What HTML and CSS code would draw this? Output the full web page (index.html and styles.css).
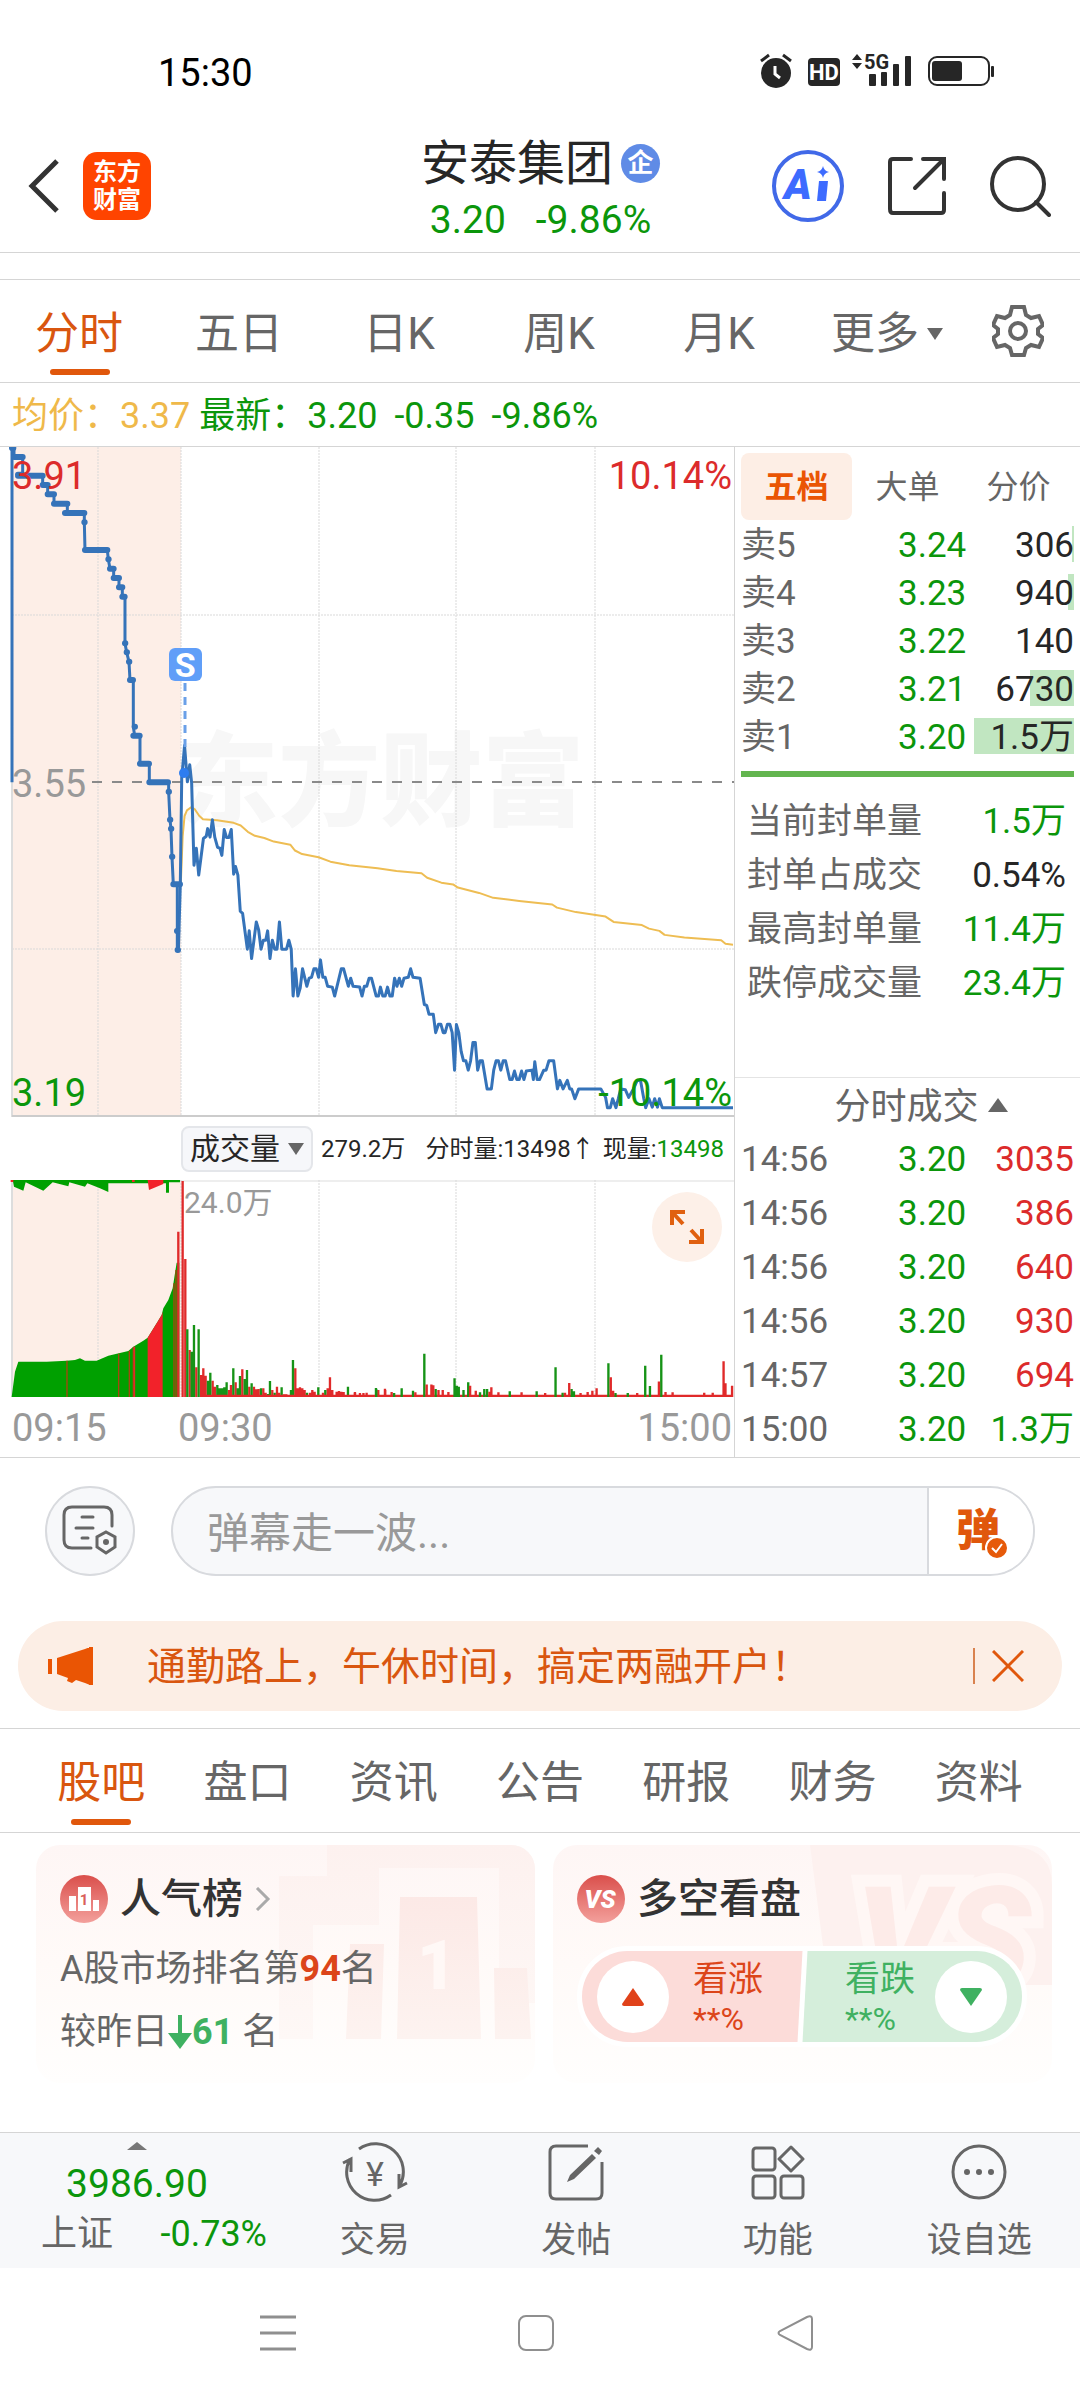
FILE: index.html
```html
<!DOCTYPE html>
<html lang="zh-CN">
<head>
<meta charset="utf-8">
<meta name="viewport" content="width=device-width, initial-scale=1">
<title>安泰集团 3.20 -9.86%</title>
<link rel="stylesheet" href="styles.css">
</head>
<body>
<div class="app">

<div class="status">
  <span class="clock">15:30</span>
  <svg class="status-icons" viewBox="0 0 236 36" role="img" aria-label="闹钟 高清通话 5G 电量">
    <g fill="#262626">
      <circle cx="16" cy="19" r="15"/>
      <path d="M1 7L9 1M31 7L23 1" stroke="#262626" stroke-width="3"/>
      <path d="M15 12v8l5 4" fill="none" stroke="#fff" stroke-width="3"/>
      <rect x="48" y="4" width="32" height="28" rx="4"/>
      <path d="M92 6l5-6 5 6zM92 9l5 6 5-6z"/>
      <rect x="109" y="20" width="7" height="12" rx="1"/><rect x="121" y="18" width="6" height="14" rx="1"/>
      <rect x="133" y="10" width="6" height="22" rx="1"/><rect x="145" y="2" width="6" height="30" rx="1"/>
      <rect x="172" y="7" width="30" height="20" rx="3"/>
      <rect x="231" y="12" width="3" height="11" rx="1"/>
    </g>
    <rect x="169" y="3" width="60" height="28" rx="8" fill="none" stroke="#262626" stroke-width="2"/>
    <text x="64" y="26" text-anchor="middle" class="svg-hd">HD</text>
    <text x="104" y="15" class="svg-5g">5G</text>
  </svg>
</div>

<header class="header">
  <div class="header-left">
    <button class="icon-btn" aria-label="返回"><svg width="32" height="56" viewBox="0 0 32 56"><path d="M29 3L4 28L29 53" fill="none" stroke="#333" stroke-width="5"/></svg></button>
    <a class="logo" href="#home"><span>东方</span><span>财富</span></a>
  </div>
  <div class="header-title">
    <h1>安泰集团<span class="corp">企</span></h1>
    <p><span>3.20</span><span>-9.86%</span></p>
  </div>
  <div class="header-right">
    <button class="icon-btn" aria-label="AI 助手"><svg width="74" height="74" viewBox="0 0 74 74"><circle cx="37" cy="37" r="34" fill="none" stroke="#4169e8" stroke-width="4"/><text x="13" y="50" class="svg-ai">A</text><path d="M48 32h9l-2 20h-9z" fill="#3d6bff"/><path d="M52 17q1 5 6 6q-5 1-6 6q-1-5-6-6q5-1 6-6z" fill="#3d6bff"/></svg></button>
    <button class="icon-btn" aria-label="分享"><svg width="60" height="60" viewBox="0 0 60 60"><path d="M24 3H6Q3 3 3 6V53Q3 57 6 57H54Q57 57 57 54V37M36 3H57V23M56 4L28 32" fill="none" stroke="#333" stroke-width="4" stroke-linecap="round"/></svg></button>
    <button class="icon-btn" aria-label="搜索"><svg width="62" height="62" viewBox="0 0 62 62"><circle cx="29" cy="29" r="26" fill="none" stroke="#333" stroke-width="4"/><path d="M47 47L60 60" stroke="#333" stroke-width="4" stroke-linecap="round"/></svg></button>
  </div>
</header>

<nav class="period-tabs">
  <button class="tab active">分时</button><button class="tab">五日</button><button class="tab">日K</button><button class="tab">周K</button><button class="tab">月K</button>
  <button class="tab">更多<svg width="16" height="14" viewBox="0 0 16 14"><path d="M0 1H16L8 13z" fill="#666"/></svg></button>
  <button class="icon-btn gear" aria-label="设置"><svg width="52" height="52" viewBox="0 0 52 52"><path d="M20 2h12l2 8 5 3 8-2 4 9-5 4v5l5 4-4 9-8-2-5 3-2 7H20l-2-7-5-3-8 2-4-9 5-4v-5l-5-4 4-9 8 2 5-3z" fill="none" stroke="#666" stroke-width="4"/><circle cx="26" cy="26" r="8" fill="none" stroke="#666" stroke-width="4"/></svg></button>
</nav>

<div class="quote-line"><span class="avg">均价：3.37</span><span>最新：3.20</span><span>-0.35</span><span>-9.86%</span></div>

<main class="market">
  <section class="charts">
    <div class="price-chart">
      <span class="watermark">东方财富</span>
      <svg class="plot" viewBox="0 0 734 670" preserveAspectRatio="none" aria-hidden="true">
        <rect x="12" y="0" width="169" height="670" fill="#fdeee7"/>
        <g stroke="#d9d9d9" stroke-width="1" stroke-dasharray="2 1">
          <path d="M98 0V670M181 0V670M319 0V670M456 0V670M595 0V670M12 168H734M12 502H734" fill="none"/>
        </g>
        <path d="M12 0V670" stroke="#ddd" stroke-width="2"/>
        <path d="M12 669H734" stroke="#ccc" stroke-width="2"/>
        <path d="M92 335H734" stroke="#8a8a8a" stroke-width="2" stroke-dasharray="10 10"/>
        <g transform="translate(0 -17) scale(.472 .4464)" fill="none" stroke-linejoin="round">
          <path class="line-avg" d="M383 1018L387 910L391 865L396 852L405 845L413 850L422 864L430 872L460 874L495 880L510 886L525 900L540 909L560 914L580 922L615 929L625 942L640 950L675 957L700 967L740 975L800 982L840 988L893 993L905 1003L935 1014L960 1018L970 1025L1015 1037L1045 1048L1100 1055L1170 1063L1180 1070L1220 1080L1283 1090L1300 1102L1360 1109L1375 1117L1397 1122L1408 1131L1450 1137L1528 1143L1537 1151L1553 1153"/>
          <polyline class="line-price" points="378,1165 382,1018 385,780 391,707 397,788 402,750 406,790 411,975 416,937 421,997 431,915 437,910 440,893 445,912 450,873 455,912 461,935 466,937 470,953 475,895 480,913 485,913 490,895 495,995 499,978 504,997 509,1078 514,1083 524,1163 528,1122 533,1184 543,1102 548,1120 553,1163 558,1143 563,1143 567,1122 572,1184 577,1143 582,1163 587,1163 592,1102 597,1163 607,1163 612,1143 617,1163 621,1268 626,1207 631,1268 636,1250 641,1207 650,1246 655,1228 660,1226 665,1207 670,1207 675,1226 679,1187 684,1226 689,1226 694,1246 704,1248 709,1268 723,1207 728,1207 738,1246 743,1228 748,1246 762,1248 767,1268 772,1246 777,1246 782,1228 787,1228 797,1268 802,1268 806,1248 811,1268 816,1268 821,1248 826,1268 831,1268 836,1228 841,1246 846,1228 851,1246 856,1228 865,1226 870,1207 875,1226 890,1228 899,1287 904,1289 909,1309 918,1309 923,1350 929,1331 934,1331 939,1350 943,1350 948,1331 953,1331 958,1350 963,1434 967,1332 972,1350 977,1392 982,1413 987,1413 992,1434 997,1413 1002,1372 1007,1372 1012,1434 1017,1413 1022,1413 1032,1476 1041,1476 1046,1434 1051,1413 1056,1413 1061,1434 1066,1413 1071,1413 1080,1455 1085,1455 1090,1436 1095,1455 1100,1455 1105,1436 1110,1455 1115,1436 1127,1434 1130,1455 1133,1415 1138,1455 1143,1455 1152,1434 1157,1434 1163,1413 1173,1413 1181,1476 1186,1457 1193,1476 1202,1457 1207,1476 1211,1476 1218,1498 1226,1476 1273,1476 1283,1495 1287,1518 1293,1518 1298,1498 1305,1518 1310,1498 1315,1476 1325,1478 1332,1495 1342,1476 1350,1457 1357,1457 1364,1498 1368,1518 1375,1498 1382,1517 1387,1498 1393,1517 1397,1498 1403,1518 1553,1518"/>
        </g>
        <g transform="translate(0 -7) scale(.3333)" fill="none">
          <path class="line-price" d="M36 1027V24H42V51H68V107H128V135H143V163H162V191H202V219H253V247L255 330H322L325 358L330 386H341V414H357V442H367V470H375V610L380 637L387 665L390 720H400V860L404 887H420V971H448V1027H506V1055L510 1139L513 1166L516 1250L520 1333H532V1530"/>
          <path class="line-step" d="M36 24h4M42 51h26M54 104h12M54 107h74M128 135h15M143 163h19M162 191h40M195 219h58M253 247h1M255 330h67M325 358h1M330 386h11M341 414h16M357 442h10M367 470h7M375 610h1M380 637h1M387 665h1M390 720h9M404 860h1M400 887h19M420 971h27M448 1027h56M506 1055h1M510 1139h1M513 1166h1M516 1250h1M520 1333h20M531 1473h1M533 1530h1"/>
        </g>
        <path d="M185 236V300" stroke="#6aa0e8" stroke-width="3" stroke-dasharray="8 6"/>
        <circle cx="184" cy="326" r="5" fill="#2d7df0"/>
      </svg>
      <span class="sell-mark">S</span>
      <span class="lbl top-left red">3.91</span><span class="lbl top-right red">10.14%</span>
      <span class="lbl middle-left">3.55</span>
      <span class="lbl bottom-left green">3.19</span><span class="lbl bottom-right green">-10.14%</span>
    </div>

    <div class="volume-info">
      <button class="indicator">成交量<svg width="16" height="14" viewBox="0 0 16 14"><path d="M0 1H16L8 13z" fill="#666"/></svg></button>
      <span>279.2万</span><span>分时量:13498↑</span><span>现量:<b class="green">13498</b></span>
    </div>

    <div class="volume-chart">
      <svg class="plot" viewBox="0 0 734 217" preserveAspectRatio="none" aria-hidden="true">
        <rect x="12" y="0" width="169" height="217" fill="#fdeee7"/>
        <path d="M98 0V217M181 0V217M319 0V217M456 0V217M595 0V217" fill="none" stroke="#d9d9d9" stroke-dasharray="2 1"/>
        <path d="M12 0V217" stroke="#ddd" stroke-width="2"/>
        <path d="M12 1H734" stroke="#ddd"/>
        <g transform="translate(0 -10) scale(.3333)">
          <path fill="#00a000" d="M35 681L45 605L55 575H140L200 572L225 570L240 565L255 572H290L325 557L385 543L400 530L430 512L443 503L470 460L485 435L490 415L505 390L518 355L525 310L530 278H538V681z"/>
          <path fill="#f2222a" d="M443 681V503L470 460L485 435L488 425V681z"/>
          <path stroke="#a5470f" stroke-width="4" d="M201 681V572M356 681V551M388 681V543M400 681V532M522 681V340M528 681V300"/>
          <path stroke="#e02a2a" stroke-width="5" d="M403 681V530"/>
          <path fill="#00a000" d="M38 30H540V37H507V68H498V40H325V66L300 55L262 40L255 50L208 37L205 49L158 37L130 62L77 37L70 62L42 50z"/>
          <path fill="#f2222a" d="M443 30H490V42L447 60zM32 30h8v6h-8zM396 30h8v6h-8z"/>
          <path class="bar-red" d="M535 681V185M548 681V33M556 681V267M569 681V540M589 681V592M603 681V615M610 681V595M617 681V617M638 681V632M645 681V650M687 681V660M693 681V645M707 681V637M727 681V598M748 681V650M762 681V650M769 681V658M776 681V657M790 681V655M797 681V668M817 681V660M831 681V650M838 681V668M852 681V673M859 681V673M886 681V595M893 681V655M900 681V652M907 681V655M914 681V660M930 681V668M937 681V660M944 681V665M969 681V668M983 681V655M990 681V622M997 681V660M1010 681V665M1017 681V663M1024 681V665M1031 681V666M1065 681V666M1080 681V669M1100 681V668M1135 681V660M1155 681V656M1175 681V666"/>
          <path class="bar-green" d="M562 681V478M575 681V545M582 681V465M596 681V478M624 681V632M631 681V608M652 681V645M659 681V655M666 681V655M673 681V652M680 681V637M700 681V595M713 681V655M720 681V618M734 681V627M741 681V600M755 681V640M783 681V655M804 681V672M810 681V633M824 681V668M845 681V652M873 681V660M879 681V570M921 681V668M955 681V652M976 681V660M1044 681V650M1128 681V654"/>
        </g>
        <g transform="translate(0 -121) scale(.472 .335)">
          <path stroke="#e02a2a" stroke-width="8" d="M430 1006H1553"/>
          <path class="bar-low green-bar" d="M797 1010V985M835 1010V997M851 1010V983M875 1010V990M899 1010V880M923 1010V985M963 1010V953M968 1010V975M972 1010V978M982 1010V988M992 1010V965M1017 1010V995M1026 1010V985M1032 1010V985M1080 1010V992M1137 1010V992M1177 1010V920M1192 1010V996M1211 1010V985M1216 1010V992M1289 1010V908M1304 1010V997M1330 1010V997M1367 1010V916M1377 1010V976M1401 1010V883"/>
          <path class="bar-low red-bar" d="M752 1010V996M770 1010V997M816 1010V988M880 1010V995M904 1010V972M914 1010V972M918 1010V974M929 1010V988M938 1010V988M950 1010V994M996 1010V975M1008 1010V990M1037 1010V993M1041 1010V980M1056 1010V995M1105 1010V995M1155 1010V997M1197 1010V996M1206 1010V967M1230 1010V997M1245 1010V994M1255 1010V990M1264 1010V983M1294 1010V950M1299 1010V990M1350 1010V997M1396 1010V963M1410 1010V994M1425 1010V995M1492 1010V996M1510 1010V996M1533 1010V902M1537 1010V968M1551 1010V975"/>
        </g>
      </svg>
      <span class="max-volume">24.0万</span>
      <button class="expand" aria-label="展开"><svg width="36" height="36" viewBox="0 0 36 36"><path d="M3 16V3H16M4 4L14 15M22 21L32 32M20 33H33V20" fill="none" stroke="#e0600f" stroke-width="4"/></svg></button>
    </div>
    <div class="time-axis"><span>09:15</span><span>09:30</span><span>15:00</span></div>
  </section>

  <aside class="orders">
    <div class="order-tabs"><button class="active">五档</button><button>大单</button><button>分价</button></div>
    <table class="depth">
      <tr><th scope="row">卖5</th><td>3.24</td><td><i style="width:2px"></i><span>306</span></td></tr>
      <tr><th scope="row">卖4</th><td>3.23</td><td><i style="width:6px"></i><span>940</span></td></tr>
      <tr><th scope="row">卖3</th><td>3.22</td><td><span>140</span></td></tr>
      <tr><th scope="row">卖2</th><td>3.21</td><td><i style="width:44px"></i><span>6730</span></td></tr>
      <tr><th scope="row">卖1</th><td>3.20</td><td><i style="width:100px"></i><span>1.5万</span></td></tr>
    </table>
    <dl class="limit">
      <div><dt>当前封单量</dt><dd class="green">1.5万</dd></div>
      <div><dt>封单占成交</dt><dd>0.54%</dd></div>
      <div><dt>最高封单量</dt><dd class="green">11.4万</dd></div>
      <div><dt>跌停成交量</dt><dd class="green">23.4万</dd></div>
    </dl>
    <button class="ticks-title">分时成交<svg width="22" height="16" viewBox="0 0 22 16"><path d="M11 1L21 15H1z" fill="#666"/></svg></button>
    <table class="ticks">
      <tr><th scope="row">14:56</th><td>3.20</td><td class="red">3035</td></tr>
      <tr><th scope="row">14:56</th><td>3.20</td><td class="red">386</td></tr>
      <tr><th scope="row">14:56</th><td>3.20</td><td class="red">640</td></tr>
      <tr><th scope="row">14:56</th><td>3.20</td><td class="red">930</td></tr>
      <tr><th scope="row">14:57</th><td>3.20</td><td class="red">694</td></tr>
      <tr><th scope="row">15:00</th><td>3.20</td><td class="green">1.3万</td></tr>
    </table>
  </aside>
</main>

<div class="comment">
  <button class="round-btn" aria-label="弹幕设置"><svg width="58" height="54" viewBox="0 0 58 54"><g fill="none" stroke="#666" stroke-width="3" stroke-linecap="round"><path d="M51 22V11Q51 3 43 3H11Q3 3 3 11V36Q3 44 11 44H30"/><path d="M21 13H32M15 24H32M21 34H27"/><path d="M45 28L54 33V43L45 49L36 43V33z"/></g><circle cx="45" cy="38" r="3" fill="#666"/></svg></button>
  <div class="comment-box">
    <input type="text" aria-label="发送弹幕" placeholder="弹幕走一波...">
    <button class="danmu-btn">弹<svg width="24" height="24" viewBox="0 0 24 24"><circle cx="12" cy="12" r="11" fill="#e65a0a" stroke="#fff" stroke-width="2"/><path d="M7 12l4 4 6-8" fill="none" stroke="#fff" stroke-width="2"/></svg></button>
  </div>
</div>

<div class="banner">
  <svg width="46" height="40" viewBox="0 0 46 40"><g fill="#ea5504"><path d="M0 13h4v15H0zM9 12L37 3V37L28 34L24 37L19 35L20 32L9 28z"/><path d="M41 1h4v38h-4zM37 3l5-2v38l-5-2z"/></g></svg>
  <a href="#open-account">通勤路上，午休时间，搞定两融开户！</a>
  <button class="close" aria-label="关闭"><svg width="32" height="32" viewBox="0 0 32 32"><path d="M1 1L31 31M31 1L1 31" stroke="#e0570c" stroke-width="3"/></svg></button>
</div>

<nav class="section-tabs">
  <button class="tab active">股吧</button><button class="tab">盘口</button><button class="tab">资讯</button><button class="tab">公告</button><button class="tab">研报</button><button class="tab">财务</button><button class="tab">资料</button>
</nav>

<div class="cards">
  <section class="card">
    <svg class="card-art" width="260" height="240" viewBox="0 0 260 240" aria-hidden="true">
      <defs><linearGradient id="fade" x1="0" y1="0" x2="0" y2="1"><stop offset="0" stop-color="#fdf1ef"/><stop offset="1" stop-color="#fef8f6"/></linearGradient><linearGradient id="podium" x1="0" y1="0" x2="0" y2="1"><stop offset="0" stop-color="#fce9e6"/><stop offset="1" stop-color="#fdf3f0"/></linearGradient></defs>
      <path d="M52 0H260V158H238V194H224V23H104V80H38V194H4V31H52z" fill="url(#fade)"/>
      <path d="M75 99H109L106 194H71zM125 52H202L206 194H122zM219 123H252L256 194H220z" fill="url(#podium)"/>
      <text x="142" y="144" class="art-one">1</text>
    </svg>
    <h2><svg width="48" height="48" viewBox="0 0 48 48"><circle cx="24" cy="24" r="24" fill="url(#badge)"/><path d="M9 21h7v15H9zM18 12h13v24H18zM33 25h6v11h-6z" fill="#fff"/><text x="24" y="30" text-anchor="middle" class="badge-one">1</text></svg>人气榜<svg class="chev" width="16" height="24" viewBox="0 0 16 24"><path d="M2 1L13 12L2 23" fill="none" stroke="#aaa" stroke-width="3"/></svg></h2>
    <p>A股市场排名第<b>94</b>名</p>
    <p>较昨日<svg width="24" height="34" viewBox="0 0 24 34"><path d="M12 0V22" stroke="#3fb161" stroke-width="4"/><path d="M0 18H24L12 34z" fill="#3fb161"/></svg><b class="down">61</b> 名</p>
  </section>
  <section class="card">
    <svg class="card-art" width="260" height="240" viewBox="0 0 260 240" aria-hidden="true">
      <path d="M18 0H210Q260 0 260 40V140H36z" fill="#fdf1ef"/>
      <text x="64" y="142" class="art-vs">VS</text>
    </svg>
    <h2><svg width="48" height="48" viewBox="0 0 48 48"><defs><linearGradient id="badge" x1="0" y1="0" x2="0" y2="1"><stop offset="0" stop-color="#da4f4b"/><stop offset="1" stop-color="#f3a09c"/></linearGradient></defs><circle cx="24" cy="24" r="24" fill="url(#badge)"/><text x="23" y="33" text-anchor="middle" class="badge-vs">VS</text></svg>多空看盘</h2>
    <div class="vote">
      <button class="rise"><span class="dot"><svg width="22" height="20" viewBox="0 0 22 20"><path d="M11 1L22 17Q22 19 20 19H2Q0 19 0 17z" fill="#e0421a"/></svg></span><span>看涨<small>**%</small></span></button>
      <button class="fall"><span>看跌<small>**%</small></span><span class="dot"><svg width="22" height="20" viewBox="0 0 22 20"><path d="M11 19L0 3Q0 1 2 1H20Q22 1 22 3z" fill="#3fb161"/></svg></span></button>
    </div>
  </section>
</div>

<footer class="toolbar">
  <button class="index-btn">
    <svg width="20" height="8" viewBox="0 0 20 8"><path d="M10 0L20 8H0z" fill="#777"/></svg>
    <span class="index-value">3986.90</span>
    <span class="index-row"><span>上证</span><span class="green">-0.73%</span></span>
  </button>
  <button class="tool"><svg width="66" height="60" viewBox="0 0 66 60"><g fill="none" stroke="#666" stroke-width="3"><path d="M17 7A28 28 0 0 1 58 43M49 53A28 28 0 0 1 8 17M1 21L9 17V30M65 41L57 45V32"/></g><text x="33" y="44" text-anchor="middle" class="svg-yen">¥</text></svg>交易</button>
  <button class="tool"><svg width="56" height="60" viewBox="0 0 56 60"><path d="M40 4H8Q2 4 2 10V51Q2 57 8 57H48Q54 57 54 51V20" fill="none" stroke="#666" stroke-width="3"/><path d="M44 12L48 16L26 37L19 40L22 33zM50 5L54 9L51 13L46 9z" fill="#666"/></svg>发帖</button>
  <button class="tool"><svg width="54" height="60" viewBox="0 0 54 60"><g fill="none" stroke="#666" stroke-width="3"><rect x="2" y="6" width="22" height="22" rx="3"/><rect x="2" y="34" width="22" height="22" rx="3"/><rect x="30" y="34" width="22" height="22" rx="3"/><path d="M40 5L52 17L40 29L28 17z" stroke-linejoin="round"/></g></svg>功能</button>
  <button class="tool"><svg width="58" height="60" viewBox="0 0 58 60"><circle cx="29" cy="30" r="26" fill="none" stroke="#666" stroke-width="3"/><g fill="#666"><circle cx="17" cy="30" r="3"/><circle cx="29" cy="30" r="3"/><circle cx="41" cy="30" r="3"/></g></svg>设自选</button>
</footer>

<nav class="system-nav">
  <button class="icon-btn" aria-label="最近任务"><svg width="36" height="36" viewBox="0 0 36 36"><path d="M0 2H36M0 18H36M0 34H36" stroke="#8f8f8f" stroke-width="3"/></svg></button>
  <button class="icon-btn" aria-label="主屏幕"><svg width="36" height="36" viewBox="0 0 36 36"><rect x="1" y="1" width="34" height="34" rx="7" fill="none" stroke="#8f8f8f" stroke-width="2"/></svg></button>
  <button class="icon-btn" aria-label="返回上一页"><svg width="36" height="36" viewBox="0 0 36 36"><path d="M30 2Q35 0 35 4V32Q35 36 30 34L3 20Q0 18 3 16z" fill="none" stroke="#8f8f8f" stroke-width="2"/></svg></button>
</nav>

</div>
</body>
</html>
```
FILE: styles.css
```css
* { box-sizing: border-box; margin: 0; padding: 0; }
body { background: #fff; color: #666; font: 36px/1.2 Roboto, "Noto Sans CJK SC", sans-serif; }
button, input { font: inherit; color: inherit; border: 0; background: none; }
button { cursor: pointer; white-space: nowrap; }
a { color: inherit; text-decoration: none; }
svg { display: block; flex: none; }
.green, .down { color: #0b960b; }
.red { color: #dc2b2b; }
.icon-btn { display: grid; place-items: center; }

.status { display: flex; justify-content: space-between; align-items: center; height: 120px; padding: 24px 84px 0 158px; }
.clock { padding-top: 4px; color: #000; font-size: 38px; }
.status-icons { width: 236px; height: 36px; overflow: visible; }
.svg-hd { font: 700 22px Roboto, sans-serif; fill: #fff; }
.svg-5g { font: 700 20px Roboto, sans-serif; fill: #262626; }

.header { display: grid; grid-template-columns: 1fr auto 1fr; align-items: center; height: 133px; padding: 0 29px 0 28px; border-bottom: 1px solid #d5d5d5; }
.header-left { display: flex; align-items: center; gap: 23px; }
.logo { display: flex; flex-direction: column; justify-content: center; align-items: center; width: 68px; height: 68px; border-radius: 14px; background: #ff4400; color: #fff; font-size: 24px; font-weight: 700; line-height: 28px; }
.header-title { padding: 3px 0 0 2px; text-align: center; }
.header-title h1 { display: flex; align-items: center; gap: 8px; color: #262626; font-size: 48px; font-weight: 400; line-height: 64px; }
.corp { width: 39px; height: 39px; border-radius: 50%; background: #5f8be6; color: #fff; font-size: 26px; font-weight: 700; line-height: 39px; }
.header-title p { display: flex; justify-content: center; gap: 30px; color: #0b960b; font-size: 39px; line-height: 48px; }
.header-right { display: flex; justify-content: flex-end; align-items: center; gap: 42px; }
.svg-ai { font: italic 900 42px Roboto, sans-serif; fill: #3d6bff; }

.period-tabs { display: grid; grid-template-columns: repeat(5, 160fr) 176fr 84fr; height: 104px; margin-top: 26px; padding-right: 20px; border-top: 1px solid #d5d5d5; border-bottom: 1px solid #d5d5d5; }
.tab { position: relative; display: flex; justify-content: center; align-items: center; gap: 8px; padding-top: 6px; color: #666; font-size: 44px; }
.period-tabs .tab { padding-right: 2px; }
.tab.active { color: #d9560f; }
.tab.active::after { content: ""; position: absolute; bottom: 7px; left: 50%; width: 60px; height: 6px; margin-left: -30px; border-radius: 3px; background: #e0570c; }

.quote-line { display: flex; align-items: center; gap: 17px; height: 63px; padding: 4px 0 0 12px; color: #0b960b; }
.quote-line .avg { margin-right: -8px; color: #efb94a; }

.market { display: flex; border-top: 1px solid #d5d5d5; border-bottom: 1px solid #d5d5d5; }
.charts { flex: 1; min-width: 0; }
.plot { position: relative; width: 100%; height: 100%; }
.price-chart { position: relative; height: 670px; }
.watermark { position: absolute; top: 266px; left: 24%; color: #f7f7f7; font-size: 102px; font-weight: 900; line-height: 140px; white-space: nowrap; }
.line-avg { stroke: #eebd53; stroke-width: 2px; vector-effect: non-scaling-stroke; }
.line-price { stroke: #3573b9; stroke-width: 3px; vector-effect: non-scaling-stroke; }
.line-step { stroke: #3573b9; stroke-width: 6px; stroke-linecap: round; vector-effect: non-scaling-stroke; }
.sell-mark { position: absolute; top: 201px; left: 23%; width: 33px; height: 33px; border-radius: 6px; background: #609ef8; color: #fff; font-size: 34px; font-weight: 700; line-height: 34px; text-align: center; }
.lbl { position: absolute; color: #999; font-size: 38px; line-height: 42px; }
.lbl.red { color: #dc2b2b; }
.lbl.green { color: #0b960b; }
.top-left, .top-right { top: 8px; }
.middle-left { top: 316px; }
.bottom-left, .bottom-right { bottom: 3px; }
.top-left, .middle-left, .bottom-left { left: 12px; }
.top-right, .bottom-right { right: 2px; }

.volume-info { display: flex; align-items: center; justify-content: space-between; height: 63px; padding: 1px 10px 0 181px; color: #262626; font-size: 24px; }
.volume-info b { font-weight: 400; }
.indicator { display: flex; align-items: center; justify-content: center; gap: 8px; width: 132px; height: 46px; border: 2px solid #e4e6ea; border-radius: 8px; background: #f6f7fa; font-size: 30px; }
.volume-info span:nth-of-type(1) { margin-right: 12px; }
.volume-chart { position: relative; height: 217px; }
.bar-red, .bar-green { fill: none; stroke: #e02a2a; stroke-width: 7px; }
.bar-green { stroke: #169316; }
.bar-low { fill: none; stroke-width: 5px; }
.green-bar { stroke: #169316; }
.red-bar { stroke: #e02a2a; }
.max-volume { position: absolute; top: 5px; left: 184px; color: #999; font-size: 30px; }
.expand { position: absolute; top: 12px; right: 12px; display: grid; place-items: center; width: 70px; height: 70px; border-radius: 50%; background: #fdf0e8; }
.time-axis { display: grid; grid-template-columns: 166px 1fr auto; height: 60px; padding: 0 2px 0 12px; color: #999; font-size: 38px; line-height: 63px; }

.orders { display: flex; flex-direction: column; width: 346px; border-left: 1px solid #d5d5d5; }
.order-tabs { display: grid; grid-template-columns: repeat(3, 111px); height: 67px; margin: 6px 0 2px 6px; font-size: 32px; }
.order-tabs button { padding-top: 2px; }
.order-tabs .active { border-radius: 8px; background: #fdeee5; color: #ea5504; font-weight: 700; }
.depth, .ticks { width: 333px; margin-left: 6px; border-collapse: collapse; table-layout: fixed; font-size: 35px; line-height: 48px; }
.orders th { width: 157px; font-weight: 400; text-align: left; }
.orders td:nth-child(2) { width: 75px; color: #0b960b; }
.orders td:nth-child(3) { position: relative; text-align: right; white-space: nowrap; }
.depth td:nth-child(3) { color: #262626; }
.depth i { position: absolute; top: 4px; right: 0; height: 36px; background: #c1e6c1; }
.depth span { position: relative; }
.limit { margin: 9px 6px 0; padding: 18px 8px 0 6px; border-top: 6px solid #63b54f; font-size: 35px; }
.limit div { display: flex; justify-content: space-between; line-height: 54px; }
.limit dd { color: #262626; }
.limit dd.green { color: #0b960b; }
.ticks-title { display: flex; justify-content: center; align-items: center; gap: 8px; height: 56px; margin-top: auto; padding: 4px 0 0 28px; border-top: 1px solid #e4e4e4; }
.ticks-title svg { margin-bottom: 6px; }
.ticks { line-height: 54px; }

.comment { display: flex; gap: 36px; padding: 28px 45px 0; }
.round-btn { display: grid; place-items: center; width: 90px; height: 90px; border: 2px solid #d8dade; border-radius: 50%; background: #f7f8fa; }
.comment-box { display: flex; flex: 1; height: 90px; border: 2px solid #d8dade; border-radius: 45px; background: #f7f8fa; overflow: hidden; }
.comment-box input { flex: 1; min-width: 0; padding: 6px 0 0 34px; font-size: 42px; outline: 0; }
.comment-box input::placeholder { color: #999; opacity: 1; }
.danmu-btn { position: relative; width: 106px; padding: 0 6px 0 0; border-left: 2px solid #d8dade; background: #fff; color: #e0570c; font-size: 44px; font-weight: 900; }
.danmu-btn svg { position: absolute; right: 24px; bottom: 14px; }

.banner { display: flex; align-items: center; height: 90px; margin: 45px 18px 17px; padding: 0 38px 0 30px; border-radius: 45px; background: #fceee5; color: #d9560f; font-size: 39px; }
.banner a { flex: 1; margin-left: 53px; padding-top: 3px; }
.close { height: 36px; padding-left: 17px; border-left: 2px solid #d9824f; }

.section-tabs { display: grid; grid-template-columns: repeat(7, 1fr); height: 105px; padding: 0 28px; border-top: 1px solid #d5d5d5; border-bottom: 1px solid #d5d5d5; }

.cards { display: grid; grid-template-columns: 1fr 1fr; gap: 18px; padding: 12px 28px 49px 36px; }
.card { position: relative; height: 238px; padding: 29px 25px 0 24px; border-radius: 24px; background: linear-gradient(#fef6f5, #fffaf8 50%, #fffefd); overflow: hidden; }
.card > * { position: relative; }
.card > .card-art { position: absolute; top: 0; right: 0; }
.card h2 { display: flex; align-items: center; gap: 12px; color: #333; font-size: 41px; font-weight: 500; line-height: 50px; }
.card p { display: flex; align-items: center; margin-top: 15px; font-size: 36px; line-height: 48px; white-space: pre; }
.card p:first-of-type { margin-top: 21px; }
.card p b { color: #dc451a; }
.card p b.down { color: #3fb161; }
.art-one { font: 900 68px Roboto, sans-serif; fill: #fff8f6; }
.art-vs { font: italic 900 140px Roboto, sans-serif; fill: #fdebe8; stroke: #fff7f5; stroke-width: 24px; paint-order: stroke; }
.badge-one { font: 700 15px Roboto, sans-serif; fill: #da5f5b; }
.badge-vs { font: italic 900 25px Roboto, sans-serif; fill: #fff; }
.vote { display: flex; width: 450px; height: 101px; margin-top: 22px; border: 5px solid #fff; border-radius: 51px; background: #fff; overflow: hidden; }
.vote button { display: flex; flex: 1; align-items: center; gap: 24px; padding: 0 15px; font-size: 35px; line-height: 44px; text-align: left; }
.vote small { display: block; font-size: 32px; line-height: 34px; }
.rise { color: #dc451a; }
.vote .rise { margin-right: -1px; background: #fcdcd9; clip-path: polygon(0 0, 100% 0, calc(100% - 5px) 100%, 0 100%); }
.vote .fall { justify-content: flex-end; background: #d5eedb; color: #3fb161; gap: 20px; clip-path: polygon(6px 0, 100% 0, 100% 100%, 1px 100%); }
.dot { display: grid; place-items: center; width: 72px; height: 72px; border-radius: 50%; background: #fff; }

.toolbar { display: grid; grid-template-columns: 274px repeat(4, 1fr); height: 136px; border-top: 1px solid #d5d5d5; background: #f7f8fa; }
.index-btn { display: flex; flex-direction: column; align-items: center; padding-top: 9px; line-height: 48px; }
.index-value { margin-top: 10px; color: #0b960b; font-size: 39px; }
.index-row { display: flex; justify-content: space-between; width: 226px; margin-top: 2px; margin-left: 34px; }
.tool { display: flex; flex-direction: column; align-items: center; gap: 15px; padding-top: 9px; font-size: 35px; line-height: 48px; }
.svg-yen { font: 34px Roboto, sans-serif; fill: #666; }

.system-nav { display: grid; grid-template-columns: repeat(3, 1fr); height: 130px; padding: 0 156px 0 149px; }
```
